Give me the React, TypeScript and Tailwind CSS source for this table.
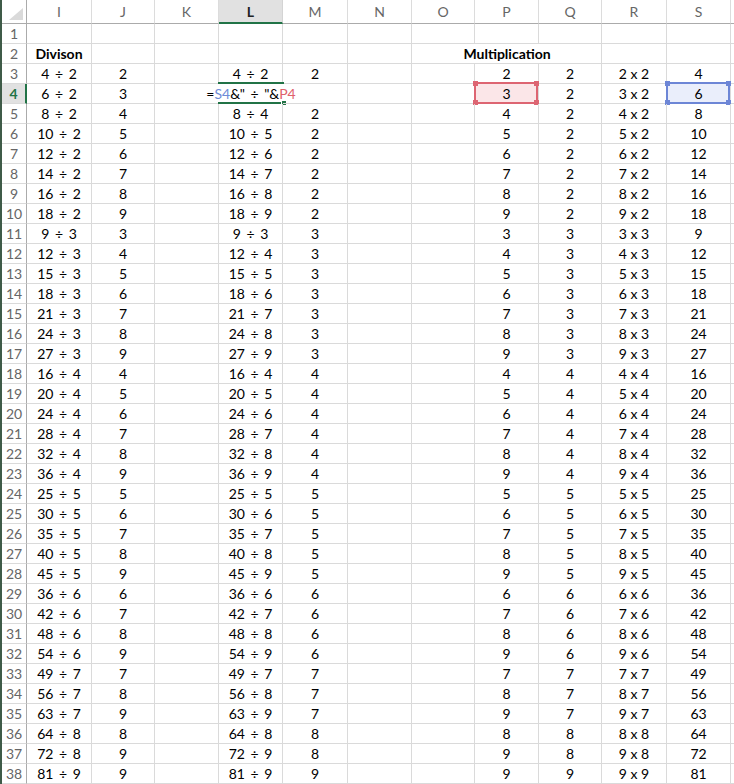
import React from "react";

const COLS = ["I", "J", "K", "L", "M", "N", "O", "P", "Q", "R", "S"];

type Row = { n: number; cells: Record<string, string> };

const rows: Row[] = [
  { n: 1, cells: {} },
  { n: 2, cells: { I: "Divison", P: "Multiplication" } },
];
let rowNo = 3;
for (let q = 2; q <= 9; q++) {
  for (let p = q; p <= 9; p++) {
    rows.push({
      n: rowNo,
      cells: {
        I: `${p * q} ÷ ${q}`,
        J: `${p}`,
        L: `${p * q} ÷ ${p}`,
        M: `${q}`,
        P: `${p}`,
        Q: `${q}`,
        R: `${p} x ${q}`,
        S: `${p * q}`,
      },
    });
    rowNo++;
  }
}

function Handles({ color }: { color: string }) {
  return (
    <>
      <span className={`absolute -left-[3px] -top-[3px] w-[5px] h-[5px] ${color}`} />
      <span className={`absolute -right-[3px] -top-[3px] w-[5px] h-[5px] ${color}`} />
      <span className={`absolute -left-[3px] -bottom-[3px] w-[5px] h-[5px] ${color}`} />
      <span className={`absolute -right-[3px] -bottom-[3px] w-[5px] h-[5px] ${color}`} />
    </>
  );
}

function Cell({ n, col, text }: { n: number; col: string; text?: string }) {
  // gridlines are hidden where text spills over (row 2) or the edited cell (L4)
  const noRight =
    (n === 2 && (col === "O" || col === "P")) || (n === 4 && (col === "K" || col === "L"));
  const divide = n > 2 && (col === "I" || col === "L");
  const cls = `relative h-5 border-b border-[#dadada] ${
    noRight ? "" : "border-r"
  } flex justify-center whitespace-nowrap leading-[19px] text-[14px] text-black ${
    n === 2 ? "font-bold" : ""
  } ${divide ? "[word-spacing:2px]" : ""}`;

  if (n === 4 && col === "L") {
    return (
      <div className={cls}>
        <span className="bg-white px-px">
          =<span className="text-[#6d8bd8]">S4</span>&amp;" ÷ "&amp;
          <span className="text-[#e0606c]">P4</span>
        </span>
        <span className="absolute -top-[2px] -left-px -right-px h-[2px] bg-[#217346]" />
        <span className="absolute -bottom-px -left-px right-[2px] h-[2px] bg-[#217346]" />
        <span className="absolute -bottom-[3px] -right-[4px] w-[6px] h-[6px] bg-[#217346] border border-white" />
      </div>
    );
  }
  if (n === 4 && col === "M") return <div className={cls} />;
  if (n === 4 && col === "P") {
    return (
      <div className={cls}>
        <span className="absolute -top-[2px] -bottom-px -left-px right-0 bg-[#fbe6e8] border-2 border-[#dd6572]">
          <Handles color="bg-[#dd6572]" />
        </span>
        <span className="relative">{text}</span>
      </div>
    );
  }
  if (n === 4 && col === "S") {
    return (
      <div className={cls}>
        <span className="absolute -top-[2px] -bottom-px -left-px right-0 bg-[#eaeefb] border-2 border-[#6d86d6]">
          <Handles color="bg-[#6d86d6]" />
        </span>
        <span className="relative">{text}</span>
      </div>
    );
  }
  return <div className={cls}>{text}</div>;
}

export default function App() {
  return (
    <div className="w-[734px] h-[784px] overflow-hidden bg-white border-l-2 border-[#3f5b48] font-['Lato',sans-serif]">
      <div className="grid grid-cols-[25px_65px_63px_64px_64px_65px_64px_63px_64px_63px_65px_64px_1fr]">
        {/* header row */}
        <div className="relative h-6 border-b border-r border-[#ababab]">
          <svg className="absolute right-[3px] bottom-[3px]" width="14" height="12" viewBox="0 0 14 12">
            <polygon points="14,0 14,12 0,12" fill="#dadada" />
          </svg>
        </div>
        {COLS.map((c) =>
          c === "L" ? (
            <div
              key={c}
              className="h-6 bg-[#e1e1e1] border-r border-[#d4d4d4] border-b-2 border-b-[#217346] flex items-center justify-center text-[14px] font-bold text-[#222]"
            >
              {c}
            </div>
          ) : (
            <div
              key={c}
              className="h-6 border-r border-[#dcdcdc] border-b border-b-[#ababab] flex items-center justify-center text-[14px] text-[#666]"
            >
              {c}
            </div>
          )
        )}
        <div className="h-6 border-b border-[#ababab]" />

        {rows.map((r) => (
          <React.Fragment key={r.n}>
            {r.n === 4 ? (
              <div className="h-5 bg-[#e1e1e1] border-b border-[#dadada] border-r-2 border-r-[#217346] flex items-center justify-center text-[14px] font-bold text-[#217346]">
                {r.n}
              </div>
            ) : (
              <div className="h-5 border-b border-[#dadada] border-r border-r-[#ababab] flex items-center justify-center text-[14px] text-[#666]">
                {r.n}
              </div>
            )}
            {COLS.map((c) => (
              <Cell key={c} n={r.n} col={c} text={r.cells[c]} />
            ))}
            <div className="h-5 border-b border-[#dadada]" />
          </React.Fragment>
        ))}
      </div>
    </div>
  );
}
